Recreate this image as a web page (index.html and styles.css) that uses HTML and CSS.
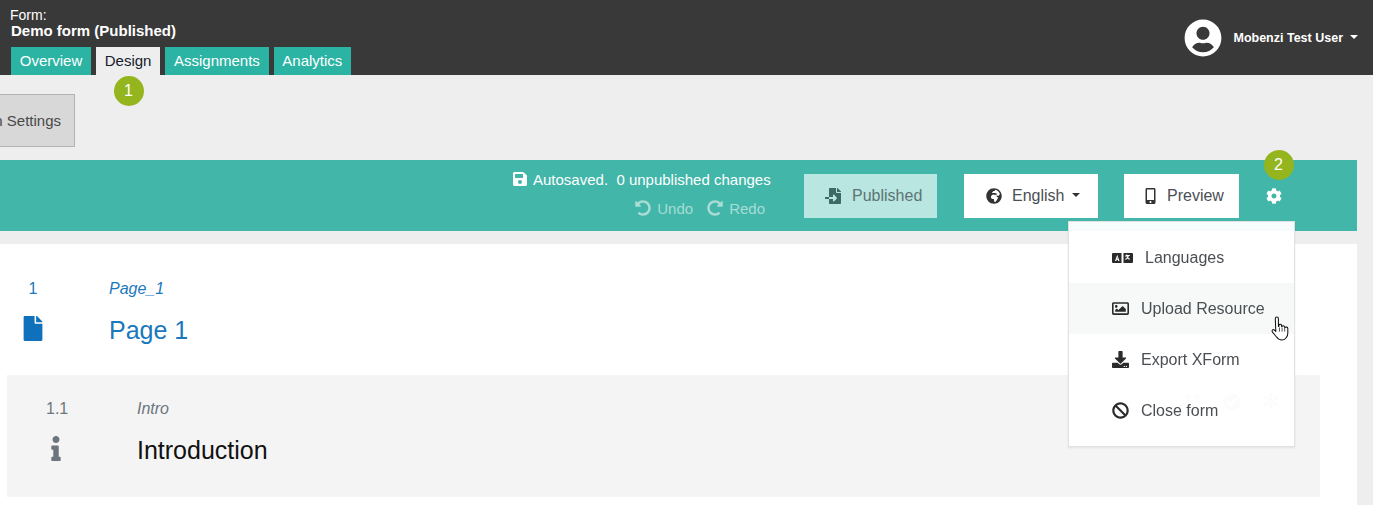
FILE: index.html
```html
<!DOCTYPE html>
<html lang="en">
<head>
<meta charset="utf-8">
<title>Demo form</title>
<link rel="stylesheet" href="styles.css">
</head>
<body>
<svg class="defs" width="0" height="0" aria-hidden="true">
  <symbol id="i-save" viewBox="0 0 448 512"><path d="M433.941 129.941l-83.882-83.882A48 48 0 0 0 316.118 32H48C21.49 32 0 53.49 0 80v352c0 26.51 21.49 48 48 48h352c26.51 0 48-21.49 48-48V163.882a48 48 0 0 0-14.059-33.941zM224 416c-35.346 0-64-28.654-64-64 0-35.346 28.654-64 64-64s64 28.654 64 64c0 35.346-28.654 64-64 64zm96-304.52V212c0 6.627-5.373 12-12 12H76c-6.627 0-12-5.373-12-12V108c0-6.627 5.373-12 12-12h228.52c3.183 0 6.235 1.264 8.485 3.515l3.48 3.48A11.996 11.996 0 0 1 320 111.48z"/></symbol>
  <symbol id="i-undo" viewBox="0 0 512 512"><path d="M255.545 8c-66.269.119-126.438 26.233-170.86 68.685L48.971 40.971C33.851 25.851 8 36.559 8 57.941V192c0 13.255 10.745 24 24 24h134.059c21.382 0 32.09-25.851 16.971-40.971l-41.75-41.75c30.864-28.899 70.801-44.907 113.23-45.273 92.398-.798 170.283 73.977 169.484 169.442C423.236 348.009 349.816 424 256 424c-41.127 0-79.997-14.678-110.63-41.556-4.743-4.161-11.906-3.908-16.368.553L89.34 422.659c-4.872 4.872-4.631 12.815.482 17.433C133.798 479.813 192.074 504 256 504c136.966 0 247.999-111.033 248-247.998C504.001 119.193 392.354 7.755 255.545 8z"/></symbol>
  <symbol id="i-import" viewBox="0 0 512 512"><path d="M16 288c-8.8 0-16 7.2-16 16v32c0 8.8 7.2 16 16 16h112v-64zm489-183L407.1 7c-4.5-4.5-10.6-7-17-7H384v128h128v-6.1c0-6.3-2.5-12.4-7-16.9zm-153 31V0H152c-13.3 0-24 10.7-24 24v264h128v-65.2c0-14.3 17.3-21.4 27.4-11.3L379 308c6.6 6.7 6.6 17.4 0 24l-95.7 96.4c-10.1 10.1-27.4 3-27.4-11.3V352H128v136c0 13.3 10.7 24 24 24h336c13.3 0 24-10.7 24-24V160H376c-13.2 0-24-10.8-24-24z"/></symbol>
  <symbol id="i-mobile" viewBox="0 0 320 512"><path d="M272 0H48C21.5 0 0 21.5 0 48v416c0 26.5 21.5 48 48 48h224c26.5 0 48-21.5 48-48V48c0-26.5-21.5-48-48-48zM160 480c-17.7 0-32-14.3-32-32s14.3-32 32-32 32 14.3 32 32-14.3 32-32 32zm112-108c0 6.6-5.4 12-12 12H60c-6.6 0-12-5.4-12-12V60c0-6.6 5.4-12 12-12h200c6.6 0 12 5.4 12 12v312z"/></symbol>
  <symbol id="i-cog" viewBox="0 0 512 512"><path d="M487.4 315.7l-42.6-24.6c4.3-23.2 4.3-47 0-70.2l42.6-24.6c4.9-2.8 7.1-8.6 5.5-14-11.1-35.6-30-67.8-54.7-94.6-3.8-4.1-10-5.1-14.8-2.3L380.8 110c-17.9-15.4-38.5-27.3-60.8-35.1V25.8c0-5.6-3.9-10.5-9.4-11.7-36.7-8.2-74.3-7.8-109.2 0-5.5 1.2-9.4 6.1-9.4 11.7V75c-22.2 7.9-42.8 19.8-60.8 35.1L88.7 85.5c-4.9-2.8-11-1.9-14.8 2.3-24.7 26.7-43.6 58.9-54.7 94.6-1.7 5.4.6 11.2 5.5 14L67.3 221c-4.3 23.2-4.3 47 0 70.2l-42.6 24.6c-4.9 2.8-7.1 8.6-5.5 14 11.1 35.6 30 67.8 54.7 94.6 3.8 4.1 10 5.1 14.8 2.3l42.6-24.6c17.9 15.4 38.5 27.3 60.8 35.1v49.2c0 5.6 3.9 10.5 9.4 11.7 36.7 8.2 74.3 7.8 109.2 0 5.5-1.2 9.4-6.1 9.4-11.7v-49.2c22.2-7.9 42.8-19.8 60.8-35.1l42.6 24.6c4.9 2.8 11 1.9 14.8-2.3 24.7-26.7 43.6-58.9 54.7-94.6 1.5-5.5-.7-11.3-5.6-14.1zM256 336c-44.1 0-80-35.9-80-80s35.9-80 80-80 80 35.9 80 80-35.9 80-80 80z"/></symbol>
  <symbol id="i-file" viewBox="0 0 384 512"><path d="M224 136V0H24C10.7 0 0 10.7 0 24v464c0 13.3 10.7 24 24 24h336c13.3 0 24-10.7 24-24V160H248c-13.2 0-24-10.8-24-24zm160-14.1v6.1H256V0h6.1c6.4 0 12.5 2.5 17 7l97.9 98c4.5 4.5 7 10.6 7 16.9z"/></symbol>
  <symbol id="i-info" viewBox="0 0 192 512"><path d="M20 424.229h20V279.771H20c-11.046 0-20-8.954-20-20V212c0-11.046 8.954-20 20-20h112c11.046 0 20 8.954 20 20v212.229h20c11.046 0 20 8.954 20 20V492c0 11.046-8.954 20-20 20H20c-11.046 0-20-8.954-20-20v-47.771c0-11.046 8.954-20 20-20zM96 0C56.235 0 24 32.235 24 72s32.235 72 72 72 72-32.235 72-72S135.764 0 96 0z"/></symbol>
  <symbol id="i-ban" viewBox="0 0 512 512"><path d="M256 8C119.034 8 8 119.033 8 256s111.034 248 248 248 248-111.034 248-248S392.967 8 256 8zm130.108 117.892c65.448 65.448 70 165.481 20.677 235.637L150.47 105.216c70.204-49.356 170.226-44.735 235.638 20.676zM125.892 386.108c-65.448-65.448-70-165.481-20.677-235.637L361.53 406.784c-70.203 49.356-170.226 44.736-235.638-20.676z"/></symbol>
  <symbol id="i-download" viewBox="0 0 512 512"><path d="M216 0h80c13.3 0 24 10.7 24 24v168h87.7c17.8 0 26.7 21.5 14.1 34.1L269.7 378.3c-7.5 7.5-19.8 7.5-27.3 0L90.1 226.1c-12.6-12.6-3.7-34.1 14.1-34.1H192V24c0-13.3 10.7-24 24-24zm296 376v112c0 13.3-10.7 24-24 24H24c-13.3 0-24-10.7-24-24V376c0-13.3 10.7-24 24-24h146.7l49 49c20.1 20.1 52.5 20.1 72.6 0l49-49H488c13.3 0 24 10.7 24 24zm-124 88c0-11-9-20-20-20s-20 9-20 20 9 20 20 20 20-9 20-20zm64 0c0-11-9-20-20-20s-20 9-20 20 9 20 20 20 20-9 20-20z"/></symbol>
  <symbol id="i-image" viewBox="0 0 512 512"><path d="M464 64H48C21.49 64 0 85.49 0 112v288c0 26.51 21.49 48 48 48h416c26.51 0 48-21.49 48-48V112c0-26.51-21.49-48-48-48zm-6 336H54a6 6 0 0 1-6-6V118a6 6 0 0 1 6-6h404a6 6 0 0 1 6 6v276a6 6 0 0 1-6 6zM128 152c-22.091 0-40 17.909-40 40s17.909 40 40 40 40-17.909 40-40-17.909-40-40-40zM96 352h320v-80l-87.515-87.515c-4.686-4.686-12.284-4.686-16.971 0L192 304l-39.515-39.515c-4.686-4.686-12.284-4.686-16.971 0L96 304v48z"/></symbol>
  <symbol id="i-user" viewBox="0 0 496 512"><path d="M248 8C111 8 0 119 0 256s111 248 248 248 248-111 248-248S385 8 248 8zm0 96c48.6 0 88 39.4 88 88s-39.4 88-88 88-88-39.4-88-88 39.4-88 88-88zm0 344c-58.7 0-111.3-26.6-146.5-68.2 18.8-35.4 55.6-59.8 98.5-59.8 2.4 0 4.8.4 7.1 1.1 13 4.2 26.6 6.9 40.9 6.9 14.3 0 28-2.7 40.9-6.9 2.3-.7 4.7-1.1 7.1-1.1 42.9 0 79.7 24.4 98.5 59.800C359.3 421.4 306.7 448 248 448z"/></symbol>
  <symbol id="i-globe" viewBox="0 0 496 512"><path d="M248 8C111.03 8 0 119.03 0 256s111.03 248 248 248 248-111.03 248-248S384.97 8 248 8zm160 215.5v6.93c0 5.87-3.32 11.24-8.57 13.86l-15.39 7.7a15.485 15.485 0 0 1-15.53-.97l-18.21-12.14a15.52 15.52 0 0 0-13.5-1.81l-2.65.88c-9.7 3.23-13.66 14.79-7.99 23.3l13.24 19.86c2.87 4.31 7.71 6.9 12.89 6.9h8.21c8.56 0 15.5 6.94 15.5 15.5v11.34c0 3.35-1.09 6.62-3.1 9.3l-18.74 24.98c-1.42 1.9-2.39 4.1-2.83 6.43l-4.3 22.83c-.62 3.29-2.29 6.29-4.76 8.56a159.608 159.608 0 0 0-25 29.16l-13.03 19.55a27.756 27.756 0 0 1-23.09 12.36c-10.51 0-20.12-5.94-24.82-15.34a78.902 78.902 0 0 1-8.33-35.29V367.5c0-8.56-6.94-15.5-15.5-15.5h-25.88c-14.49 0-28.38-5.76-38.63-16a54.659 54.659 0 0 1-16-38.63v-14.06c0-17.19 8.1-33.38 21.85-43.7l27.58-20.69a54.663 54.663 0 0 1 32.78-10.93h.89c8.48 0 16.85 1.97 24.43 5.77l14.72 7.36c3.68 1.84 7.93 2.14 11.83.84l47.31-15.77c6.33-2.11 10.6-8.03 10.6-14.7 0-8.56-6.94-15.5-15.5-15.5h-10.09c-4.11 0-8.05-1.63-10.96-4.54l-6.92-6.92a15.493 15.493 0 0 0-10.96-4.54H199.5c-8.56 0-15.5-6.94-15.5-15.5v-4.4c0-7.11 4.84-13.31 11.74-15.04l14.45-3.61c3.74-.94 7-3.23 9.14-6.44l8.08-12.11c2.87-4.31 7.71-6.9 12.89-6.9h24.21c8.56 0 15.5-6.94 15.5-15.5v-21.7C359.23 71.63 422.86 131.02 441.93 208H423.5c-8.56 0-15.5 6.94-15.5 15.5z"/></symbol>
  <symbol id="i-lang" viewBox="0 0 21 12"><path fill-rule="evenodd" d="M1 1h8.500v10H1a1 1 0 0 1-1-1V2a1 1 0 0 1 1-1zm4.250 1.700L3 9h1.300l.4-1.200h1.100L6.200 9h1.300L5.250 2.700zm0 2.300l.35 1.500H4.900L5.250 5zM11.500 1H20a1 1 0 0 1 1 1v8a1 1 0 0 1-1 1h-8.500V1zm1.500 2.400v1h2.300c-.3 1-.8 1.800-2.300 2.400l.5 1c1-.4 1.600-.9 2-1.400.5.600 1.100 1 2 1.400l.5-1c-1-.4-1.500-.8-1.800-1.300.3-.5.500-1 .6-1.600h1v-1h-2.600V2.600h-1.100v.8H13z"/></symbol>
  <symbol id="i-branch" viewBox="0 0 16 16"><path d="M2 1h4v4H5v1.500l3 2 3-2V5h-1V1h4v4h-1v2.500l-4 2.700V11h1v4H6v-4h1v-.8L3 7.500V5H2z"/></symbol>
  <symbol id="i-check" viewBox="0 0 512 512"><path fill-rule="evenodd" d="M256 8a248 248 0 1 1 0 496 248 248 0 0 1 0-496zm-29 357 184-184c6-6 6-16 0-22l-23-23c-6-6-16-6-22 0L216 286l-70-70c-6-6-16-6-22 0l-23 23c-6 6-6 16 0 22l104 104c6 6 16 6 22 0z"/></symbol>
  <symbol id="i-star" viewBox="0 0 512 512"><path d="M219 0h74c6 0 11 5 10 11l-16 163 134-95c5-4 12-2 15 3l37 64c3 5 1 12-5 14l-149 68 149 68c6 2 8 9 5 14l-37 64c-3 5-10 7-15 3l-134-95 16 163c1 6-4 11-10 11h-74c-6 0-11-5-10-11l16-163-134 95c-5 4-12 2-15-3l-37-64c-3-5-1-12 5-14l149-68-149-68c-6-2-8-9-5-14l37-64c3-5 10-7 15-3l134 95-16-163c-1-6 4-11 10-11z"/></symbol>
</svg>

<header class="topbar">
  <div class="brand">
    <div class="form-label">Form:</div>
    <div class="form-name">Demo form (Published)</div>
    <nav class="tabs">
      <a class="tab">Overview</a>
      <a class="tab tab-active">Design</a>
      <a class="tab">Assignments</a>
      <a class="tab">Analytics</a>
    </nav>
  </div>
  <div class="account">
    <svg class="avatar"><use href="#i-user"/></svg>
    <span class="account-name">Mobenzi Test User</span>
    <span class="caret caret-white"></span>
  </div>
</header>

<main class="page">
  <div class="settings-row">
    <button class="settings-btn">Design Settings</button>
  </div>

  <section class="toolbar">
    <div class="status">
      <div class="saved"><svg class="ico-save"><use href="#i-save"/></svg><span>Autosaved.&nbsp; 0 unpublished changes</span></div>
      <div class="history">
        <span class="hist"><svg class="ico-hist"><use href="#i-undo"/></svg>Undo</span>
        <span class="hist"><svg class="ico-hist flip"><use href="#i-undo"/></svg>Redo</span>
      </div>
    </div>
    <button class="tbtn tbtn-published"><svg class="ico-import"><use href="#i-import"/></svg>Published</button>
    <button class="tbtn tbtn-lang"><svg class="ico-globe"><use href="#i-globe"/></svg>English<span class="caret caret-dark"></span></button>
    <button class="tbtn tbtn-preview"><svg class="ico-mobile"><use href="#i-mobile"/></svg>Preview</button>
    <svg class="ico-cog"><use href="#i-cog"/></svg>
  </section>

  <section class="sheet">
    <div class="page-row">
      <div class="num-col">
        <div class="num">1</div>
        <svg class="ico-file"><use href="#i-file"/></svg>
      </div>
      <div class="title-col">
        <div class="code">Page_1</div>
        <div class="title">Page 1</div>
      </div>
    </div>
    <div class="card">
      <div class="num-col card-num">
        <div class="num">1.1</div>
        <svg class="ico-info"><use href="#i-info"/></svg>
      </div>
      <div class="title-col">
        <div class="code">Intro</div>
        <div class="title">Introduction</div>
      </div>
      <div class="card-actions">
        <svg class="ico-act"><use href="#i-branch"/></svg>
        <svg class="ico-act"><use href="#i-check"/></svg>
        <svg class="ico-act"><use href="#i-star"/></svg>
      </div>
    </div>
  </section>
</main>

<span class="badge badge-one">1</span>
<span class="badge badge-two">2</span>

<div class="menu">
  <a class="menu-item"><svg class="ico-lang"><use href="#i-lang"/></svg><span class="lang-text">Languages</span></a>
  <a class="menu-item menu-hover"><svg class="ico-menu"><use href="#i-image"/></svg>Upload Resource</a>
  <a class="menu-item"><svg class="ico-menu"><use href="#i-download"/></svg>Export XForm</a>
  <a class="menu-item"><svg class="ico-menu"><use href="#i-ban"/></svg>Close form</a>
</div>

<svg class="pointer" viewBox="0 0 18 24">
  <path d="M5.500 1c1 0 1.500.7 1.500 1.600v7.400l.5-.1V8.800c0-1 2.300-1.200 2.500.2v1l.5 0c.2-1 2.300-1 2.500.3v.8l.4 0c.4-.8 2.600-.6 2.600.8v4.600c0 2.500-1.800 6.500-5.500 6.500-3.200 0-4.500-1.500-5.500-3-1.100-1.600-2.700-3.300-3.800-4.800-.9-1.400.8-2.800 2-1.700l1.300 1.300L4 2.600C4 1.700 4.600 1 5.500 1z" fill="#fff" stroke="#111" stroke-width="1" stroke-linejoin="round"/>
  <path d="M8 11v4M10.500 11v4M13 11.500v3.500" stroke="#111" stroke-width=".7" fill="none"/>
</svg>
</body>
</html>
```

FILE: styles.css
```css
* { box-sizing: border-box; }
html, body { margin: 0; padding: 0; }
body {
  position: relative;
  width: 1373px;
  height: 505px;
  overflow: hidden;
  background: #eeeeee;
  font-family: "Liberation Sans", Arial, sans-serif;
  font-size: 16px;
  color: #333;
}
.defs { position: absolute; }
svg { display: block; fill: currentColor; flex: none; }

.topbar {
  height: 75px;
  background: #393939;
  color: #fff;
  display: flex;
  justify-content: space-between;
  padding: 0 15px 0 11px;
}
.brand { display: flex; flex-direction: column; }
.form-label { font-size: 14px; line-height: 16px; margin: 7px 0 0 -1px; }
.form-name { font-size: 15px; font-weight: 700; line-height: 16px; }
.tabs { display: flex; gap: 5px; margin-top: 8px; }
.tab {
  height: 28px;
  line-height: 28px;
  padding: 0 8.75px;
  font-size: 15px;
  background: #2bb3a3;
  color: #fff;
}
.tab-active { background: #eeeeee; color: #16202c; }
.account { display: flex; align-items: center; height: 75px; }
.avatar { width: 38px; height: 38px; color: #fff; }
.account-name { font-size: 12.5px; font-weight: 700; margin-left: 11px; }
.caret { display: inline-block; width: 0; height: 0; border-style: solid; border-width: 4.500px 4.500px 0; border-color: transparent; }
.caret-white { border-top-color: #fff; margin: -2px 0 0 7px; }
.caret-dark { border-top-color: #333; margin: -2px 0 0 8px; }

.page { width: 1357px; }
.settings-row { display: flex; justify-content: flex-end; width: 75px; height: 53px; margin-top: 19px; overflow: hidden; }
.settings-btn {
  flex: none;
  width: 130px;
  height: 53px;
  border: 1px solid #b3b3b3;
  background: #d8d8d8;
  color: #494949;
  font: 15px "Liberation Sans", Arial, sans-serif;
  padding: 0 13px 0 0;
  text-align: right;
  white-space: nowrap;
}

.toolbar {
  display: flex;
  justify-content: flex-end;
  align-items: center;
  height: 71px;
  margin-top: 13px;
  padding: 0 75px 0 0;
  background: #41b6a9;
}
.status { display: flex; flex-direction: column; align-items: flex-end; width: 261px; margin: 0 33px 4px 0; }
.saved { display: flex; align-items: center; gap: 6px; color: #fff; font-size: 15px; width: 100%; height: 20px; padding-left: 3px; white-space: nowrap; }
.ico-save { width: 14px; height: 16px; }
.history { display: flex; gap: 14px; height: 20px; margin: 9px 6px 0 0; color: #a9dcd5; font-size: 15px; align-items: center; }
.hist { display: flex; align-items: center; gap: 6px; }
.ico-hist { width: 16px; height: 16px; }
.flip { transform: scaleX(-1); }

.tbtn {
  display: flex;
  align-items: center;
  height: 44px;
  border: 0;
  background: #fff;
  color: #4b4f54;
  font: 16px "Liberation Sans", Arial, sans-serif;
  padding: 1px 0 0;
}
.tbtn-published { width: 133px; background: #b9e6e0; color: #5c7474; margin-right: 27px; padding-left: 21px; }
.ico-import { width: 16px; height: 16px; color: #3e6966; margin-right: 11px; }
.tbtn-lang { width: 134px; margin-right: 26px; padding-left: 22px; }
.ico-globe { width: 16px; height: 16px; margin-right: 10px; color: #333; }
.tbtn-preview { width: 115px; padding-left: 21px; }
.ico-mobile { width: 11px; height: 16px; margin-right: 11px; color: #333; }
.ico-cog { width: 16px; height: 16px; color: #fff; margin-left: 27px; }

.sheet { background: #fff; height: 261px; margin-top: 13px; padding-top: 33px; }
.page-row { display: flex; height: 98px; }
.num-col { width: 109px; padding-left: 23px; }
.num { font-size: 16px; line-height: 24px; color: #1b78bd; width: 20px; text-align: center; white-space: nowrap; }
.ico-file { width: 20px; height: 25px; margin-top: 15px; color: #0f71bb; }
.title-col { flex: 1; }
.code { font-size: 16px; font-style: italic; line-height: 24px; color: #1b78bd; }
.title { font-size: 25px; line-height: 32px; margin-top: 13px; color: #1b78bd; }

.card {
  position: relative;
  display: flex;
  width: 1313px;
  height: 122px;
  margin-left: 7px;
  background: #f4f4f4;
  padding-top: 22px;
}
.card-num { width: 130px; padding-left: 39px; }
.card .num { color: #6c757d; width: 21px; }
.ico-info { width: 10px; height: 25px; margin: 15px 0 0 5px; color: #6c757d; }
.card .code { color: #6c757d; }
.card .title { color: #111; margin-top: 13px; }
.card-actions { position: absolute; top: 18px; left: 1177px; display: flex; gap: 21px; }
.ico-act { width: 18px; height: 18px; color: #b5b8bc; }

.badge {
  position: absolute;
  width: 30px;
  height: 30px;
  border-radius: 50%;
  background: #94b51e;
  color: #fff;
  font-size: 16px;
  line-height: 30px;
  text-align: center;
  padding-right: 1px;
}
.badge-one { left: 114px; top: 76px; }
.badge-two { left: 1264px; top: 150px; }

.menu {
  position: absolute;
  left: 1068px;
  top: 221px;
  width: 227px;
  height: 226px;
  padding: 10px 0 0;
  background: rgba(255, 255, 255, 0.96);
  border: 1px solid #e2e2e2;
  box-shadow: 0 1px 2px rgba(0, 0, 0, 0.08);
  display: flex;
  flex-direction: column;
  filter: blur(0.3px);
}
.menu-item {
  display: flex;
  align-items: center;
  height: 51px;
  padding-left: 43px;
  color: #4b4f54;
  font-size: 16px;
}
.menu-hover { background: #f7f9f8; }
.ico-menu { width: 17px; height: 17px; margin-right: 12px; color: #2b2b2b; }
.ico-lang { width: 21px; height: 12px; margin-right: 12px; color: #2b2b2b; }
.pointer { position: absolute; left: 1271px; top: 316px; width: 19px; height: 25px; }
```
